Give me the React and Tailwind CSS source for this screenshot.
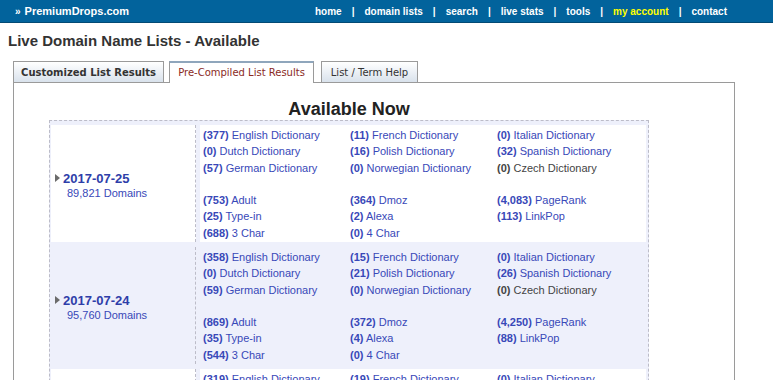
import React from "react";

const LINK = "text-[#3848b8]";

const rows = [
  {
    date: "2017-07-25",
    domains: "89,821 Domains",
    bg: "bg-white",
    cols: [
      [["377", "English Dictionary"], ["0", "Dutch Dictionary"], ["57", "German Dictionary"], null, ["753", "Adult"], ["25", "Type-in"], ["688", "3 Char"]],
      [["11", "French Dictionary"], ["16", "Polish Dictionary"], ["0", "Norwegian Dictionary"], null, ["364", "Dmoz"], ["2", "Alexa"], ["0", "4 Char"]],
      [["0", "Italian Dictionary"], ["32", "Spanish Dictionary"], ["0", "Czech Dictionary", true], null, ["4,083", "PageRank"], ["113", "LinkPop"], null],
    ],
  },
  {
    date: "2017-07-24",
    domains: "95,760 Domains",
    bg: "bg-[#eef0fb]",
    cols: [
      [["358", "English Dictionary"], ["0", "Dutch Dictionary"], ["59", "German Dictionary"], null, ["869", "Adult"], ["35", "Type-in"], ["544", "3 Char"]],
      [["15", "French Dictionary"], ["21", "Polish Dictionary"], ["0", "Norwegian Dictionary"], null, ["372", "Dmoz"], ["4", "Alexa"], ["0", "4 Char"]],
      [["0", "Italian Dictionary"], ["26", "Spanish Dictionary"], ["0", "Czech Dictionary", true], null, ["4,250", "PageRank"], ["88", "LinkPop"], null],
    ],
  },
  {
    date: "2017-07-23",
    domains: "91,204 Domains",
    bg: "bg-white",
    cols: [
      [["319", "English Dictionary"], ["0", "Dutch Dictionary"], ["61", "German Dictionary"], null, ["801", "Adult"], ["31", "Type-in"], ["602", "3 Char"]],
      [["19", "French Dictionary"], ["18", "Polish Dictionary"], ["0", "Norwegian Dictionary"], null, ["355", "Dmoz"], ["3", "Alexa"], ["0", "4 Char"]],
      [["0", "Italian Dictionary"], ["29", "Spanish Dictionary"], ["0", "Czech Dictionary", true], null, ["4,112", "PageRank"], ["97", "LinkPop"], null],
    ],
  },
];

function Item({ item }) {
  if (!item) return <div className="h-[16.3px]">&nbsp;</div>;
  const [n, label, gray] = item;
  const c = gray ? "text-[#444444]" : LINK;
  return (
    <div className={`h-[16.3px] whitespace-nowrap ${c}`}>
      <span className="font-bold">({n})</span> {label}
    </div>
  );
}

function Row({ row }) {
  return (
    <div className="flex h-[117px] gap-[4px]">
      <div className={`w-[145px] shrink-0 ${row.bg} border-r border-dashed border-[#bcbcc8] flex items-center pl-[4px] pt-[3px]`}>
        <svg width="5" height="8" viewBox="0 0 5 8" className="mr-[3px] mt-[-14px]">
          <path d="M0 0 L5 4 L0 8 Z" fill="#6b6b6b" />
        </svg>
        <div>
          <div className="text-[13px] leading-[15px] font-bold text-[#2e3ea9]">{row.date}</div>
          <div className={`text-[11px] leading-[14px] pl-[4px] ${LINK}`}>{row.domains}</div>
        </div>
      </div>
      <div className={`flex-1 ${row.bg} pl-[3px] pt-[2px] text-[11px] leading-[16.3px] grid grid-cols-[147px_147px_147px]`}>
        {row.cols.map((col, i) => (
          <div key={i}>
            {col.map((it, j) => (
              <Item key={j} item={it} />
            ))}
          </div>
        ))}
      </div>
    </div>
  );
}

function Tab({ children, active, className }) {
  return (
    <div
      className={`h-[21px] flex items-center justify-center border border-[#9a9a9a] text-[10px] ${
        active
          ? "bg-white border-t-2 border-t-[#8fa6bc] border-b-0 h-[22px] text-[#8a2a1e] relative z-10 pb-[1px]"
          : "bg-gradient-to-b from-white to-[#d9e2ec] border-b-0 text-[#333333]"
      } ${className}`}
      style={{ fontFamily: '"DejaVu Sans", Verdana, sans-serif' }}
    >
      {children}
    </div>
  );
}

export default function App() {
  const nav = ["home", "domain lists", "search", "live stats", "tools", "my account", "contact"];
  return (
    <div className="w-[773px] h-[380px] overflow-hidden bg-white" style={{ fontFamily: '"Liberation Sans", Arial, sans-serif' }}>
      <div className="h-[23px] bg-[#02639c] border-b border-[#034a74] flex items-center">
        <div className="pl-[15px] text-white font-bold text-[11px] flex-1">
          <span className="text-[10px] mr-[4px]">»</span>PremiumDrops.com
        </div>
        <div className="flex items-center pr-[46px] text-[10px] font-bold text-white">
          {nav.map((n, i) => (
            <React.Fragment key={n}>
              {i > 0 && <span className="px-[10px]">|</span>}
              <span className={n === "my account" ? "text-[#ffff00]" : ""}>{n}</span>
            </React.Fragment>
          ))}
        </div>
      </div>

      <div className="pl-[8px] pt-[9px] text-[15px] leading-[18px] font-bold text-[#333333]">
        Live Domain Name Lists - Available
      </div>

      <div className="ml-[13px] mt-[11px] flex items-end">
        <Tab className="w-[151px] font-bold">Customized List Results</Tab>
        <Tab active className="w-[145px] ml-[5px] -mb-px">Pre-Compiled List Results</Tab>
        <Tab className="w-[97px] ml-[7px]">List / Term Help</Tab>
      </div>

      <div className="ml-[13px] w-[722px] h-[400px] border border-[#9a9a9a] border-b-0">
        <div className="ml-[35px] w-[600px]">
          <div className="pt-[15px] text-center text-[18px] leading-[22px] font-bold text-[#222222]">Available Now</div>
          <div className="border border-dashed border-[#bcbcc8] bg-[#eef0fb] pt-[4px] pl-[1px] pr-[2px] pb-[4px] flex flex-col gap-[5px]">
            {rows.map((r) => (
              <Row key={r.date} row={r} />
            ))}
          </div>
        </div>
      </div>
    </div>
  );
}
